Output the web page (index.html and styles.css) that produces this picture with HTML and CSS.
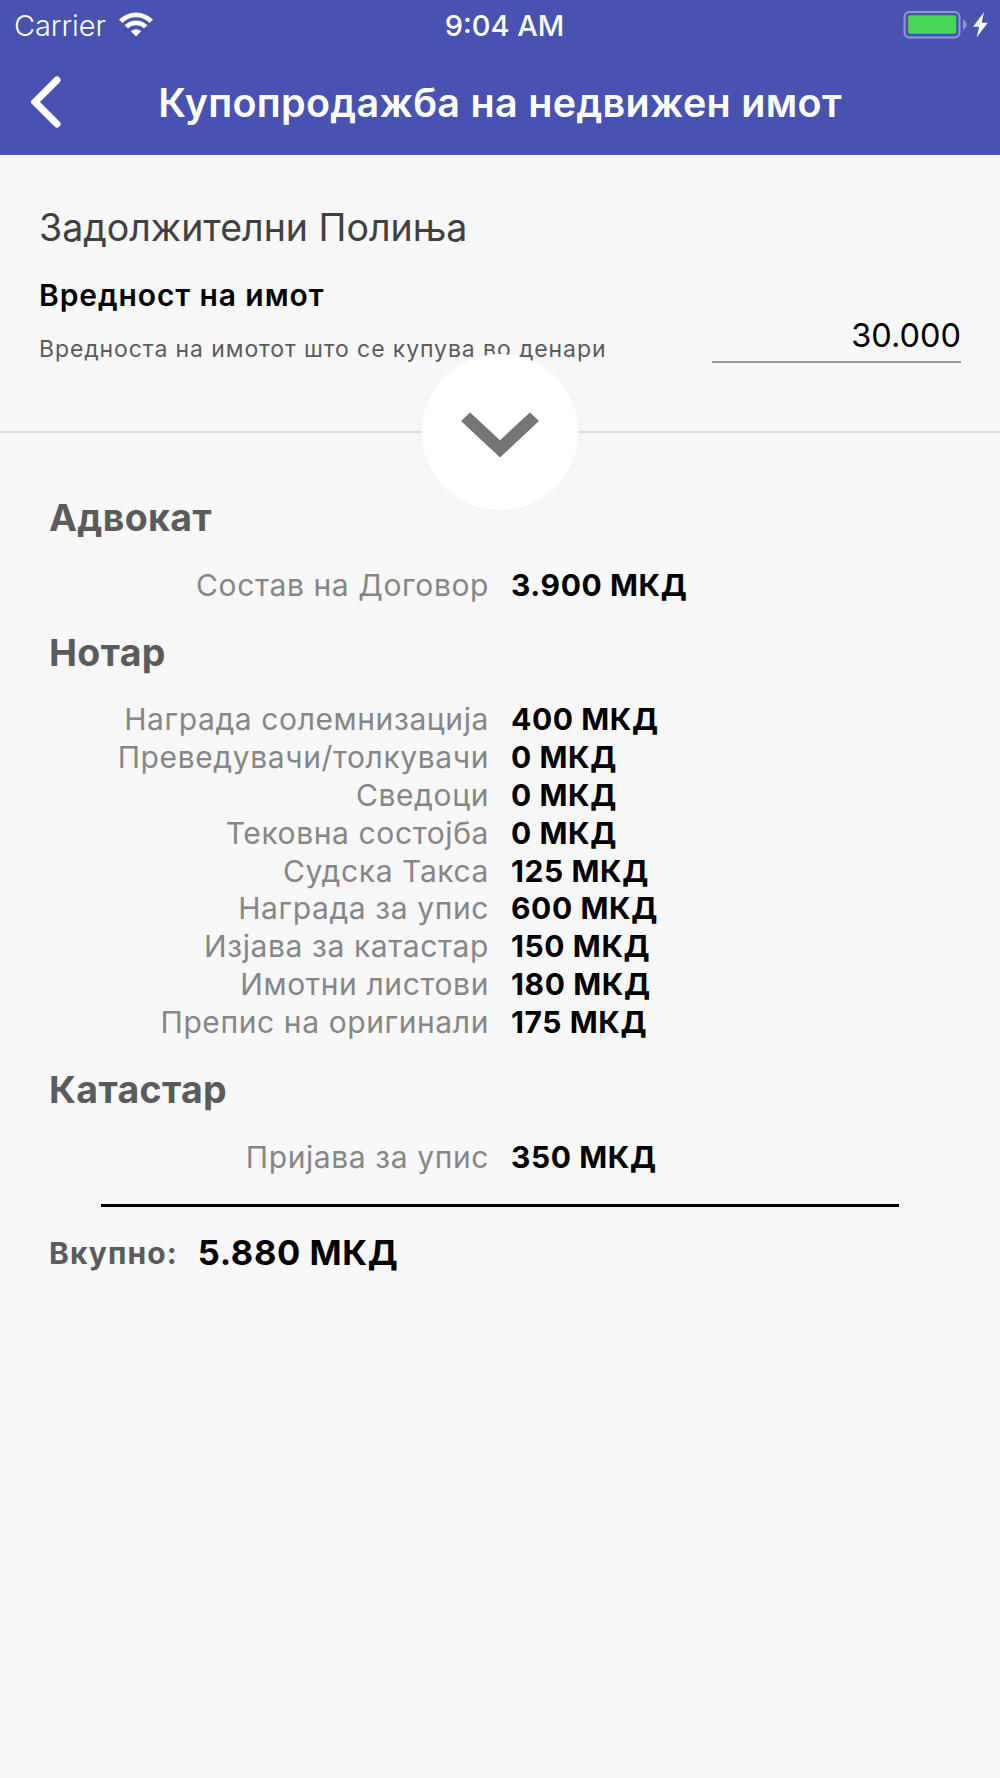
FILE: index.html
```
<!DOCTYPE html>
<html lang="mk">
<head>
    <meta charset="UTF-8">
    <meta name="viewport" content="width=device-width, initial-scale=1.0">
    <title>Купопродажба на недвижен имот</title>
    <link rel="stylesheet" href="styles.css">
</head>
<body>
    <header class="header">
        <div class="status-bar">
            <div class="status-left">
                <span class="carrier">Carrier</span>
                <svg class="wifi" width="34" height="25" viewBox="0 0 34 25">
                    <path d="M0 7.6 A24 24 0 0 1 34 7.6 L30.6 11 A19.2 19.2 0 0 0 3.4 11 Z"/>
                    <path d="M5.6 13.2 A16.2 16.2 0 0 1 28.4 13.2 L25 16.6 A11.4 11.4 0 0 0 9 16.6 Z"/>
                    <path d="M11.8 19.2 A7.6 7.6 0 0 1 22.2 19.2 L17 24.5 Z"/>
                </svg>
            </div>
            <span class="clock">9:04 AM</span>
            <div class="status-right">
                <svg class="battery" width="86" height="28" viewBox="0 0 86 28">
                    <rect class="battery-case" x="1.5" y="1" width="55" height="25.4" rx="5"/>
                    <rect class="battery-level" x="5.2" y="4.3" width="48" height="18.4" rx="2"/>
                    <path class="battery-tip" d="M60 8.6 Q63.5 10.5 63.5 13.7 T60 18.8 Z"/>
                    <path class="bolt" d="M81 1.3 L70 15.7 H76.2 L73.6 26.5 L84.8 11.8 H78.6 Z"/>
                </svg>
            </div>
        </div>
        <div class="nav-bar">
            <svg class="back" width="30" height="52" viewBox="0 0 30 52">
                <path d="M26 4 L4 26 L26 48"/>
            </svg>
            <h1 class="nav-title">Купопродажба на недвижен имот</h1>
        </div>
    </header>

    <section class="form">
        <h2 class="form-title">Задолжителни Полиња</h2>
        <div class="field">
            <div class="field-info">
                <div class="field-name">Вредност на имот</div>
                <div class="field-hint">Вредноста на имотот што се купува во денари</div>
            </div>
            <div class="field-input">30.000</div>
        </div>
        <div class="toggle">
            <svg width="80" height="46" viewBox="0 0 80 46">
                <path d="M1 9 L10.2 0.5 L40 28.3 L69.8 0.5 L79 9 L40 45.5 Z"/>
            </svg>
        </div>
    </section>

    <main class="results">
        <h3 class="group-title">Адвокат</h3>
        <div class="group">
            <span class="label">Состав на Договор</span><span class="value">3.900 МКД</span>
        </div>
        <h3 class="group-title">Нотар</h3>
        <div class="group">
            <span class="label">Награда солемнизација</span><span class="value">400 МКД</span>
            <span class="label">Преведувачи/толкувачи</span><span class="value">0 МКД</span>
            <span class="label">Сведоци</span><span class="value">0 МКД</span>
            <span class="label">Тековна состојба</span><span class="value">0 МКД</span>
            <span class="label">Судска Такса</span><span class="value">125 МКД</span>
            <span class="label">Награда за упис</span><span class="value">600 МКД</span>
            <span class="label">Изјава за катастар</span><span class="value">150 МКД</span>
            <span class="label">Имотни листови</span><span class="value">180 МКД</span>
            <span class="label">Препис на оригинали</span><span class="value">175 МКД</span>
        </div>
        <h3 class="group-title">Катастар</h3>
        <div class="group">
            <span class="label">Пријава за упис</span><span class="value">350 МКД</span>
        </div>
        <div class="line"></div>
        <div class="total">
            <span class="total-label">Вкупно:</span>
            <span class="total-value">5.880 МКД</span>
        </div>
    </main>
</body>
</html>
```
FILE: styles.css
```
body{
    margin: 0;
    background-color: #f7f7f7;
    font-family: Inter, "Liberation Sans", sans-serif;
    color: black;
}
h1, h2, h3{
    margin: 0;
}
.header{
    box-sizing: border-box;
    height: 156px;
    background-color: #4852b0;
    color: white;
    border-bottom: 1px solid white;
}
.status-bar{
    height: 50px;
    display: grid;
    grid-template-columns: 1fr auto 1fr;
    align-items: center;
    font-size: 29px;
    line-height: 50px;
}
.status-left{
    display: flex;
    align-items: center;
    padding-left: 14px;
    gap: 13px;
}
.carrier{
    padding-top: 1px;
    font-weight: 350;
    letter-spacing: -0.1px;
}
.wifi{
    margin-top: -2px;
    fill: white;
}
.clock{
    padding: 1px 0 0 9px;
    font-weight: 500;
}
.status-right{
    display: flex;
    justify-content: flex-end;
    padding-right: 11px;
}
.battery{
    margin-top: -1px;
}
.battery-case{
    fill: none;
    stroke: #9297d0;
    stroke-width: 2;
}
.battery-level{
    fill: #47d755;
}
.battery-tip{
    fill: #9297d0;
}
.bolt{
    fill: white;
}
.nav-bar{
    height: 104px;
    display: grid;
    grid-template-columns: 100px 1fr 100px;
    align-items: center;
}
.back{
    margin-left: 31px;
    fill: none;
    stroke: white;
    stroke-width: 7;
    stroke-linecap: round;
}
.nav-title{
    padding-top: 2px;
    font-size: 39.5px;
    font-weight: 600;
    letter-spacing: 0.3px;
    text-align: center;
    white-space: nowrap;
}
.form{
    position: relative;
    box-sizing: border-box;
    height: 277px;
    padding: 50px 39px 0 39px;
    border-bottom: 2px solid #dddddd;
}
.form-title{
    font-size: 37.5px;
    line-height: 44px;
    font-weight: 400;
    color: #404040;
}
.field{
    margin-top: 27px;
    display: flex;
    justify-content: space-between;
    align-items: flex-end;
}
.field-name{
    font-size: 30px;
    line-height: 36px;
    font-weight: 600;
    letter-spacing: 0.9px;
}
.field-hint{
    margin-top: 22px;
    font-size: 23px;
    line-height: 28px;
    letter-spacing: 0.9px;
    color: #5b5b5b;
}
.field-input{
    width: 249px;
    padding-bottom: 5px;
    border-bottom: 2px solid #999999;
    font-size: 32.5px;
    line-height: 40px;
    text-align: right;
}
.toggle{
    position: absolute;
    left: 422px;
    bottom: -79px;
    width: 156px;
    height: 156px;
    border-radius: 50%;
    background-color: white;
    display: flex;
    align-items: center;
    justify-content: center;
}
.toggle svg{
    margin-top: 6px;
    fill: #757575;
}
.results{
    padding: 37px 49px;
}
.group-title{
    padding-top: 26px;
    font-size: 37.5px;
    line-height: 44px;
    font-weight: 700;
    letter-spacing: 0.35px;
    color: #5b5b5b;
}
.group{
    margin-top: 26.7px;
    display: grid;
    grid-template-columns: 440px 1fr;
    column-gap: 22px;
    font-size: 30px;
    line-height: 37.85px;
}
.label{
    text-align: right;
    font-weight: 400;
    letter-spacing: 0.6px;
    color: #868686;
}
.value{
    font-weight: 700;
    letter-spacing: 0.6px;
}
.line{
    height: 3px;
    margin: 28px 52px 24px 52px;
    background-color: black;
}
.total{
    display: flex;
    align-items: center;
    gap: 20px;
    line-height: 44px;
}
.total-label{
    font-size: 30px;
    font-weight: 700;
    letter-spacing: 1.1px;
    color: #5b5b5b;
}
.total-value{
    font-size: 34.5px;
    font-weight: 700;
    letter-spacing: 0.6px;
}
```
